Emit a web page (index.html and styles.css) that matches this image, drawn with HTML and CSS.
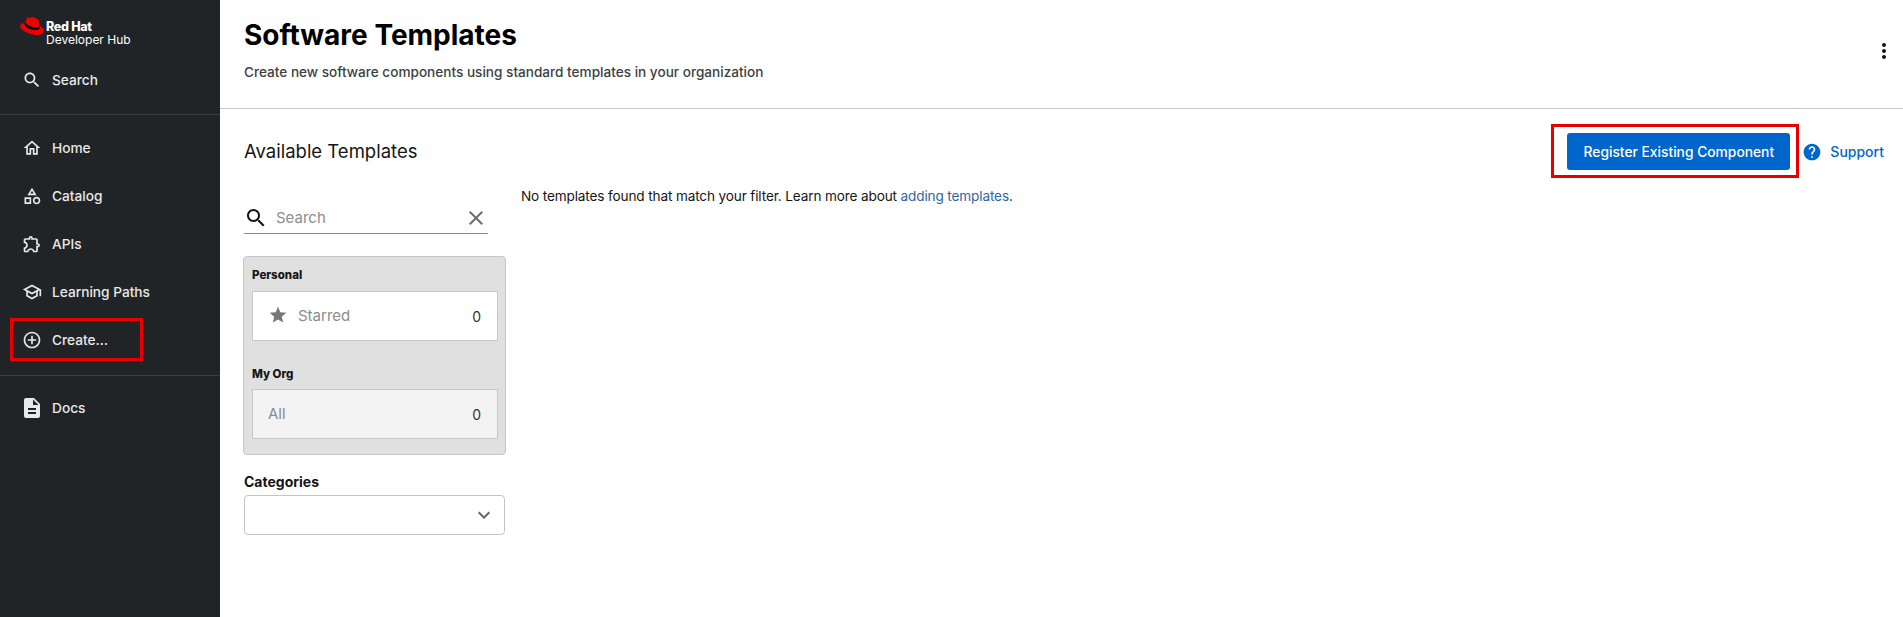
FILE: index.html
```html
<!DOCTYPE html>
<html lang="en">
<head>
    <meta charset="UTF-8">
    <title>Software Templates | Red Hat Developer Hub</title>
    <link rel="stylesheet" href="styles.css">
</head>
<body>
    <nav class="sidebar">
        <div class="logo">
            <svg class="logo-hat" width="24" height="18" viewBox="0 0 192 145">
                <path fill="#e00" d="M127.47 83.49c12.51 0 30.61-2.58 30.61-17.46a14 14 0 0 0-.31-3.42l-7.45-32.36c-1.72-7.12-3.23-10.35-15.73-16.6C124.89 8.69 103.76.5 97.51.5 91.69.5 90 8 83.06 8c-6.68 0-11.64-5.6-17.89-5.6-6 0-9.91 4.09-12.93 12.5 0 0-8.41 23.72-9.49 27.16A6.43 6.43 0 0 0 42.53 44c0 9.22 36.3 39.45 84.94 39.45M160 72.07c1.73 8.19 1.73 9.05 1.73 10.13 0 14-15.74 21.77-36.43 21.77C78.54 104 37.58 76.6 37.58 58.49a18.45 18.45 0 0 1 1.51-7.33C22.27 52 .5 55 .5 74.22c0 31.48 74.59 70.28 133.65 70.28 45.28 0 56.7-20.48 56.7-36.65 0-12.72-11-27.16-30.83-35.78"/>
                <path fill="#000" d="M160 72.07c1.73 8.19 1.73 9.05 1.73 10.13 0 14-15.74 21.77-36.43 21.77C78.54 104 37.58 76.6 37.58 58.49a18.45 18.45 0 0 1 1.51-7.33l3.66-9.06A6.43 6.43 0 0 0 42.53 44c0 9.22 36.3 39.45 84.94 39.45 12.51 0 30.61-2.58 30.61-17.46a14 14 0 0 0-.31-3.42z"/>
            </svg>
            <div class="logo-text">
                <strong>Red Hat</strong>
                <span>Developer Hub</span>
            </div>
        </div>
        <a class="nav-item nav-search">
            <svg viewBox="0 0 24 24"><path d="M15.500 14h-.79l-.28-.27C15.410 12.590 16 11.110 16 9.500 16 5.910 13.090 3 9.500 3S3 5.910 3 9.500 5.910 16 9.500 16c1.610 0 3.090-.59 4.230-1.570l.27.28v.79l5 4.990L20.490 19l-4.990-5zm-6 0C7.010 14 5 11.990 5 9.500S7.010 5 9.500 5 14 7.010 14 9.500 11.990 14 9.500 14z"/></svg>
            Search
        </a>
        <hr class="nav-divider">
        <div class="nav-group">
            <a class="nav-item">
                <svg viewBox="0 0 24 24"><path d="M12 5.690l5 4.500V18h-2v-6H9v6H7v-7.810l5-4.500M12 3L2 12h3v8h6v-6h2v6h6v-8h3L12 3z"/></svg>
                Home
            </a>
            <a class="nav-item">
                <svg viewBox="0 0 24 24"><path d="M12 2l-5.500 9h11L12 2zm0 3.840L13.930 9h-3.870L12 5.840zM17.500 13c-2.490 0-4.500 2.010-4.500 4.500s2.010 4.500 4.500 4.500 4.500-2.010 4.500-4.500-2.010-4.500-4.500-4.500zm0 7c-1.380 0-2.500-1.120-2.500-2.500s1.120-2.500 2.500-2.500 2.500 1.120 2.500 2.500-1.120 2.500-2.500 2.500zM3 21.500h8v-8H3v8zm2-6h4v4H5v-4z"/></svg>
                Catalog
            </a>
            <a class="nav-item">
                <svg viewBox="0 0 24 24"><path d="M10.500 4.500c.28 0 .5.22.5.5v2h6v6h2c.28 0 .5.22.5.5s-.22.5-.5.5h-2v6h-2.120c-.68-1.750-2.390-3-4.380-3s-3.700 1.250-4.380 3H4v-2.120c1.750-.68 3-2.390 3-4.380 0-1.990-1.240-3.700-2.990-4.380L4 7h6V5c0-.28.22-.5.5-.5m0-2C9.120 2.500 8 3.620 8 5H4c-1.100 0-1.990.9-1.990 2v3.800h.29c1.490 0 2.700 1.210 2.700 2.700s-1.210 2.700-2.700 2.700H2V20c0 1.100.9 2 2 2h3.800v-.3c0-1.490 1.210-2.700 2.700-2.700s2.700 1.210 2.700 2.700v.3H17c1.100 0 2-.9 2-2v-4c1.380 0 2.500-1.120 2.500-2.500S20.380 11 19 11V7c0-1.100-.9-2-2-2h-4c0-1.380-1.120-2.500-2.500-2.500z"/></svg>
                APIs
            </a>
            <a class="nav-item">
                <svg viewBox="0 0 24 24"><path d="M12 3L1 9l4 2.180v6L12 21l7-3.820v-6l2-1.090V17h2V9L12 3zm6.820 6L12 12.720 5.180 9 12 5.280 18.820 9zM17 15.990l-5 2.730-5-2.730v-3.720L12 15l5-2.730v3.720z"/></svg>
                Learning Paths
            </a>
            <a class="nav-item nav-create">
                <svg viewBox="0 0 24 24"><path d="M13 7h-2v4H7v2h4v4h2v-4h4v-2h-4V7zm-1-5C6.480 2 2 6.480 2 12s4.480 10 10 10 10-4.480 10-10S17.520 2 12 2zm0 18c-4.410 0-8-3.590-8-8s3.590-8 8-8 8 3.590 8 8-3.590 8-8 8z"/></svg>
                Create…
            </a>
        </div>
        <hr class="nav-divider nav-divider-low">
        <div class="nav-group">
            <a class="nav-item nav-item-solid">
                <svg viewBox="0 0 24 24"><path d="M14 2H6c-1.100 0-1.990.9-1.990 2L4 20c0 1.100.89 2 1.990 2H18c1.100 0 2-.9 2-2V8l-6-6zm2 16H8v-2h8v2zm0-4H8v-2h8v2zm-3-5V3.500L18.500 9H13z"/></svg>
                Docs
            </a>
        </div>
    </nav>

    <div class="page">
        <header class="page-header">
            <div>
                <h1>Software Templates</h1>
                <p>Create new software components using standard templates in your organization</p>
            </div>
            <svg class="more" viewBox="0 0 24 24"><path d="M12 8c1.100 0 2-.9 2-2s-.9-2-2-2-2 .9-2 2 .9 2 2 2zm0 2c-1.100 0-2 .9-2 2s.9 2 2 2 2-.9 2-2-.9-2-2-2zm0 6c-1.100 0-2 .9-2 2s.9 2 2 2 2-.9 2-2-.9-2-2-2z"/></svg>
        </header>

        <main class="content">
            <div class="content-top">
                <h2>Available Templates</h2>
                <div class="actions">
                    <button class="primary" type="button">Register Existing Component</button>
                    <a class="support">
                        <svg viewBox="0 0 24 24"><path d="M12 2C6.480 2 2 6.480 2 12s4.480 10 10 10 10-4.480 10-10S17.520 2 12 2zm1 17h-2v-2h2v2zm2.070-7.750l-.9.92C13.450 12.900 13 13.500 13 15h-2v-.5c0-1.100.45-2.100 1.170-2.830l1.240-1.260c.37-.36.59-.86.59-1.410 0-1.100-.9-2-2-2s-2 .9-2 2H8c0-2.210 1.790-4 4-4s4 1.790 4 4c0 .88-.36 1.680-.93 2.250z"/></svg>
                        Support
                    </a>
                </div>
            </div>

            <div class="columns">
                <aside class="filters">
                    <div class="search-field">
                        <svg class="search-icon" viewBox="0 0 24 24"><path d="M15.500 14h-.79l-.28-.27C15.410 12.590 16 11.110 16 9.500 16 5.910 13.090 3 9.500 3S3 5.910 3 9.500 5.910 16 9.500 16c1.610 0 3.090-.59 4.230-1.570l.27.28v.79l5 4.990L20.490 19l-4.990-5zm-6 0C7.010 14 5 11.990 5 9.500S7.010 5 9.500 5 14 7.010 14 9.500 11.990 14 9.500 14z"/></svg>
                        <span class="search-placeholder">Search</span>
                        <svg class="clear-icon" viewBox="0 0 24 24"><path d="M19 6.410L17.590 5 12 10.590 6.410 5 5 6.410 10.590 12 5 17.590 6.410 19 12 13.410 17.590 19 19 17.590 13.410 12z"/></svg>
                    </div>

                    <div class="picker">
                        <h3>Personal</h3>
                        <div class="picker-item">
                            <span class="picker-label">
                                <svg viewBox="0 0 24 24"><path d="M12 17.270L18.180 21l-1.640-7.030L22 9.240l-7.190-.61L12 2 9.190 8.630 2 9.240l5.460 4.730L5.820 21z"/></svg>
                                Starred
                            </span>
                            <span class="picker-count">0</span>
                        </div>
                        <h3 class="picker-org">My Org</h3>
                        <div class="picker-item picker-item-off">
                            <span class="picker-label">All</span>
                            <span class="picker-count">0</span>
                        </div>
                    </div>

                    <label class="select-label">Categories</label>
                    <div class="select-box">
                        <svg viewBox="0 0 24 24"><path d="M16.590 8.590L12 13.170 7.410 8.590 6 10l6 6 6-6z"/></svg>
                    </div>
                </aside>

                <p class="empty">No templates found that match your filter. Learn more about <a href="#">adding templates</a>.</p>
            </div>
        </main>
    </div>
</body>
</html>
```

FILE: styles.css
```css
* {
    box-sizing: border-box;
}
html, body {
    height: 100%;
}
body {
    margin: 0;
    display: flex;
    font-family: Inter, "Noto Sans", sans-serif;
    color: #151515;
    background-color: #fff;
    overflow: hidden;
}
svg {
    fill: currentColor;
    flex: none;
}

/* Sidebar */
.sidebar {
    width: 220px;
    flex: none;
    background-color: #212427;
    color: #fff;
}
.logo {
    display: flex;
    align-items: flex-start;
    gap: 2px;
    height: 57px;
    padding: 17px 0 0 20px;
}
.logo-text {
    display: flex;
    flex-direction: column;
    padding-top: 3px;
    font-size: 12px;
    line-height: 13px;
}
.logo-text strong {
    font-size: 12.5px;
    font-weight: 800;
    letter-spacing: -0.3px;
}
.nav-item {
    display: flex;
    align-items: center;
    gap: 10px;
    height: 48px;
    padding-left: 22px;
    font-size: 13.7px;
    font-weight: 500;
    color: #e8e8e8;
}
.nav-item svg {
    width: 20px;
    height: 20px;
}
.nav-item-solid {
    gap: 8px;
    padding-left: 20px;
}
.nav-item-solid svg {
    width: 24px;
    height: 24px;
}
.nav-search {
    height: 46px;
}
.nav-divider {
    border: 0;
    border-top: 1px solid #3b3d40;
    margin: 11px 0 9px;
}
.nav-divider-low {
    margin-bottom: 8px;
}
.nav-create {
    position: relative;
}
.nav-create::after {
    content: "";
    position: absolute;
    left: 10px;
    top: 2px;
    width: 127px;
    height: 37px;
    border: 3px solid #e80000;
}

/* Header */
.page {
    flex: 1;
    min-width: 0;
}
.page-header {
    display: flex;
    justify-content: space-between;
    height: 109px;
    padding: 16px 0 0 24px;
    border-bottom: 1px solid #c9c9c9;
}
h1 {
    margin: 0;
    font-size: 28px;
    line-height: 38px;
    font-weight: 700;
    color: #000;
}
.page-header p {
    margin: 9px 0 0;
    font-size: 13.6px;
    line-height: 18px;
    font-weight: 500;
    color: #3c3f42;
}
.more {
    width: 24px;
    height: 24px;
    margin: 23px 7px 0 0;
    color: #151515;
}

/* Content */
.content {
    padding: 24px 19px 0 24px;
}
.content-top {
    display: flex;
    justify-content: space-between;
    align-items: center;
    height: 37px;
}
h2 {
    margin: 0;
    padding-bottom: 2px;
    font-size: 18.5px;
    font-weight: 400;
    color: #151515;
}
.actions {
    display: flex;
    align-items: center;
    gap: 12px;
}
.primary {
    position: relative;
    width: 223px;
    height: 37px;
    padding: 0;
    border: none;
    border-radius: 3px;
    background-color: #06c;
    color: #fff;
    font-family: inherit;
    font-size: 13.8px;
    font-weight: 500;
}
.primary::after {
    content: "";
    position: absolute;
    left: -16px;
    top: -9px;
    right: -9px;
    bottom: -8px;
    border: 3px solid #e80000;
}
.support {
    display: flex;
    align-items: center;
    gap: 8px;
    color: #06c;
    font-size: 14px;
    font-weight: 500;
}
.support svg {
    width: 20px;
    height: 20px;
}
.columns {
    display: flex;
    align-items: flex-start;
    gap: 15px;
    padding-top: 17px;
}
.filters {
    width: 262px;
    flex: none;
}
.search-field {
    display: flex;
    align-items: flex-end;
    width: 244px;
    height: 47px;
    padding-bottom: 3px;
    border-bottom: 1px solid #8a8d90;
}
.search-icon {
    width: 24px;
    height: 24px;
    color: #151515;
}
.search-placeholder {
    flex: 1;
    margin-left: 8px;
    font-size: 15px;
    line-height: 24px;
    color: #8a8d90;
}
.clear-icon {
    width: 24px;
    height: 24px;
    color: #6a6e73;
}
.picker {
    width: 263px;
    height: 199px;
    margin: 22px 0 0 -1px;
    padding: 9px 7px 0 8px;
    background-color: #e0e0e0;
    border: 1px solid #c7c7c7;
    border-radius: 4px;
}
.picker h3 {
    margin: 0 0 7px;
    font-size: 11.5px;
    line-height: 18px;
    font-weight: 800;
}
.picker .picker-org {
    margin: 24px 0 6px;
}
.picker-item {
    display: flex;
    align-items: center;
    justify-content: space-between;
    height: 50px;
    padding: 0 16px 0 15px;
    background-color: #fff;
    border: 1px solid #c7c7c7;
}
.picker-item-off {
    background-color: #f3f3f3;
}
.picker-label {
    display: flex;
    align-items: center;
    gap: 10px;
    margin-bottom: 2px;
    font-size: 15px;
    color: #8a8d90;
}
.picker-label svg {
    width: 20px;
    height: 20px;
    color: #777;
}
.picker-count {
    font-size: 14px;
    color: #333;
}
.select-label {
    display: block;
    margin-top: 18px;
    font-size: 14px;
    line-height: 18px;
    font-weight: 700;
}
.select-box {
    display: flex;
    align-items: center;
    justify-content: flex-end;
    width: 261px;
    height: 40px;
    margin-top: 4px;
    padding-right: 8px;
    border: 1px solid #c4c4c4;
    border-radius: 4px;
}
.select-box svg {
    width: 24px;
    height: 24px;
    color: #666;
}
.empty {
    margin: 0;
    font-size: 13.6px;
    letter-spacing: -0.14px;
    line-height: 18px;
    color: #151515;
}
.empty a {
    color: #30659f;
    text-decoration: none;
}
```
